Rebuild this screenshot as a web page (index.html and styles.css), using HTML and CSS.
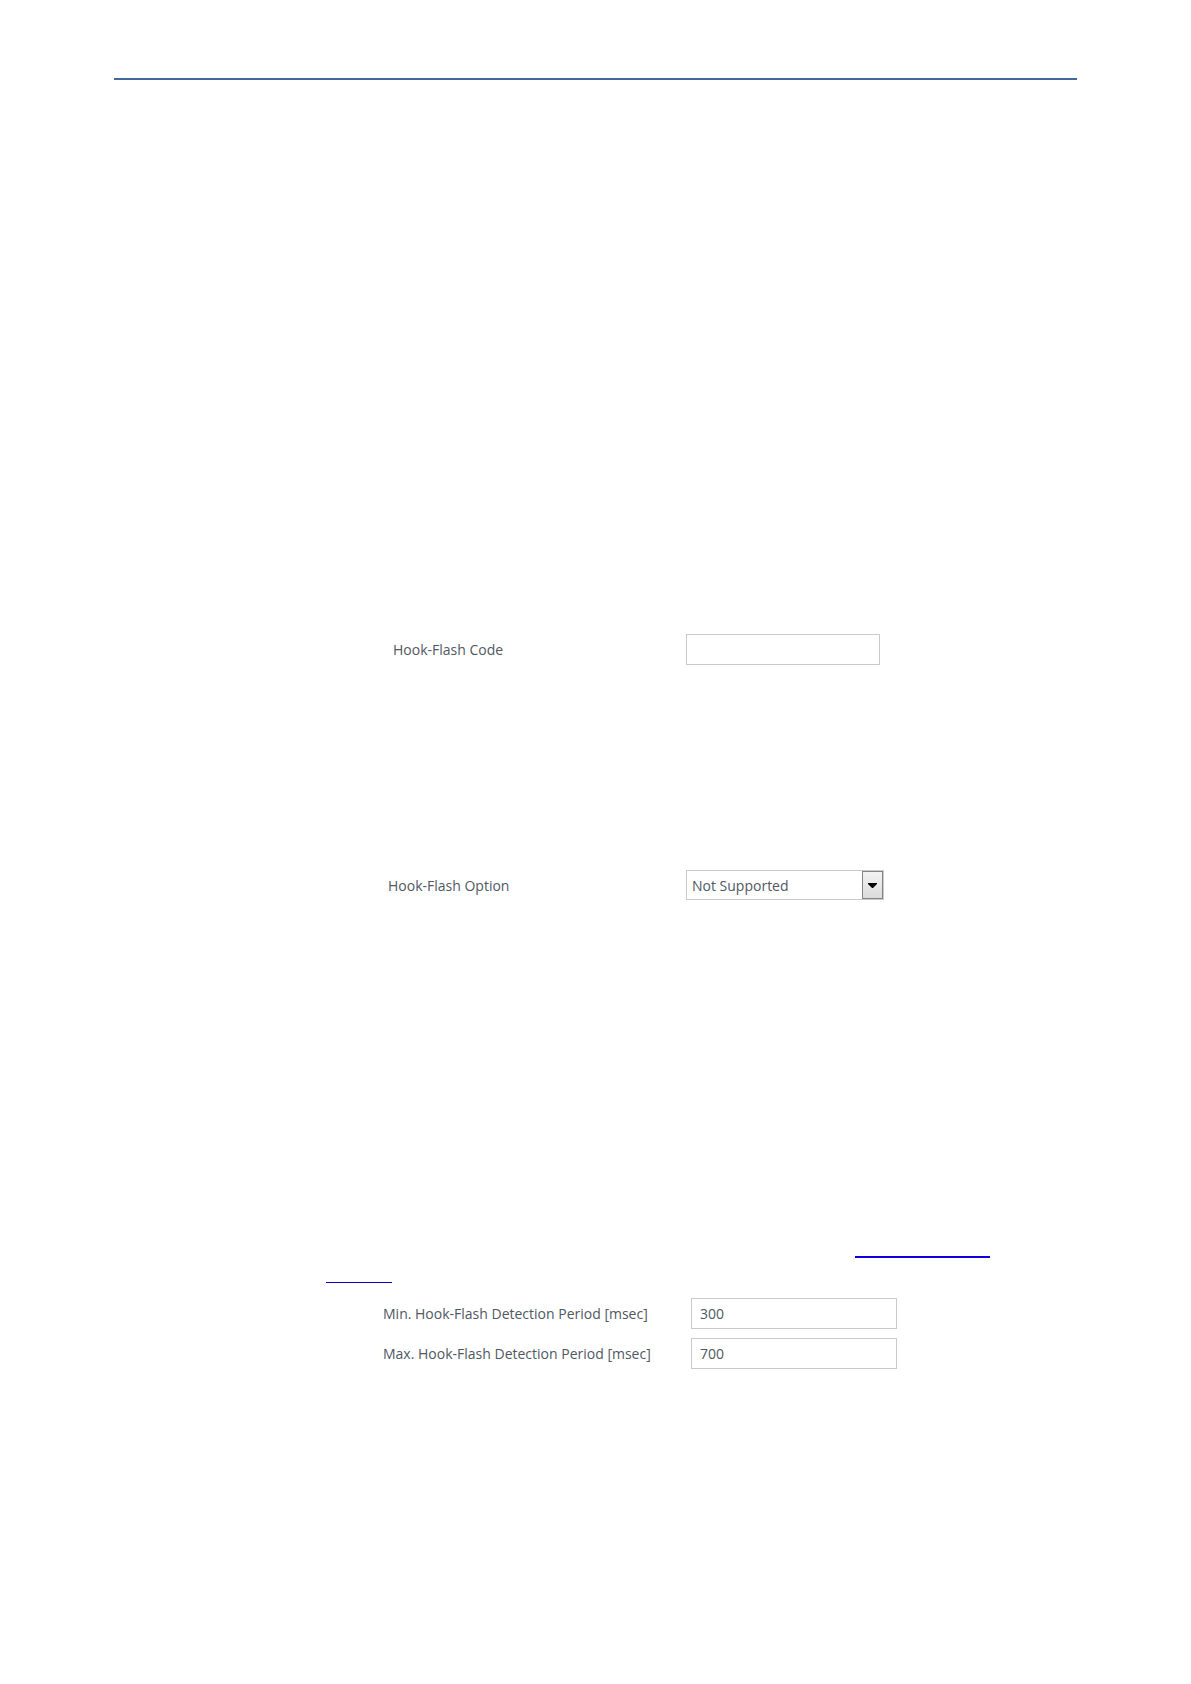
FILE: index.html
```html
<!DOCTYPE html>
<html lang="en">
<head>
    <meta charset="UTF-8">
    <meta name="viewport" content="width=device-width, initial-scale=1.0">
    <title>Hook-Flash Settings</title>
    <link rel="stylesheet" href="styles.css">
</head>
<body>
    <main class="page">
        <hr class="header-rule">

        <form class="settings">
            <!-- Hook-flash code -->
            <div class="field field-code">
                <label for="hookFlashCode">Hook-Flash Code</label>
                <input type="text" id="hookFlashCode">
            </div>

            <!-- Hook-flash option -->
            <div class="field field-option">
                <label for="hookFlashOption">Hook-Flash Option</label>
                <div class="select-box">
                    <select id="hookFlashOption">
                        <option>Not Supported</option>
                    </select>
                    <span class="select-arrow">
                        <svg width="9" height="5" viewBox="0 0 9 5"><path d="M0 0H9V1L5 5H4L0 1Z" fill="#000"/></svg>
                    </span>
                </div>
            </div>

            <!-- Links -->
            <div class="links">
                <a href="#" class="link-top"></a>
                <a href="#" class="link-bottom"></a>
            </div>

            <!-- Detection period -->
            <div class="period">
                <div class="field field-period">
                    <label for="minPeriod">Min. Hook-Flash Detection Period [msec]</label>
                    <input type="text" id="minPeriod" value="300">
                </div>
                <div class="field field-period">
                    <label for="maxPeriod">Max. Hook-Flash Detection Period [msec]</label>
                    <input type="text" id="maxPeriod" value="700">
                </div>
            </div>
        </form>
    </main>
</body>
</html>
```
FILE: styles.css
```css
* {
    margin: 0;
    padding: 0;
    box-sizing: border-box;
}

body {
    font-family: 'Open Sans', 'Noto Sans', sans-serif;
    font-size: 14px;
    background-color: #fff;
    color: #4f5862;
}

.page {
    padding: 78px 114px;
}

.header-rule {
    height: 2px;
    border: none;
    background-color: #42699c;
}

/* Form */
.settings {
    padding-top: 554px;
    padding-left: 212px;
}

.field {
    display: grid;
    align-items: center;
}

.field input,
.field select {
    width: 100%;
    height: 31px;
    padding: 0 8px;
    border: 1px solid #c8cbcd;
    border-radius: 0;
    outline: none;
    background-color: #fff;
    font: inherit;
    color: inherit;
}

.field-code {
    padding-left: 67px;
    grid-template-columns: 293px 194px;
    margin-bottom: 205px;
}

.field-option {
    padding-left: 62px;
    grid-template-columns: 298px 198px;
}

.select-box {
    position: relative;
}

.field select {
    display: block;
    height: 30px;
    padding: 0 24px 0 5px;
    appearance: none;
}

.select-arrow {
    position: absolute;
    top: 1px;
    right: 1px;
    bottom: 1px;
    width: 21px;
    display: flex;
    align-items: center;
    justify-content: center;
    border: 1px solid #858585;
    background: linear-gradient(#f2f2f2, #dcdcdc);
    pointer-events: none;
}

/* Links */
.links {
    display: flex;
    flex-direction: column;
    margin-top: 334px;
    margin-bottom: 15px;
}

.link-top {
    align-self: flex-end;
    width: 135px;
    height: 24px;
    margin-right: 87px;
    border-bottom: 2px solid #0b00dc;
}

.link-bottom {
    width: 66px;
    height: 25px;
    border-bottom: 1px solid #0b00b4;
}

/* Detection period */
.period {
    display: flex;
    flex-direction: column;
    gap: 9px;
}

.field-period {
    padding-left: 57px;
    grid-template-columns: 308px 206px;
}
```
